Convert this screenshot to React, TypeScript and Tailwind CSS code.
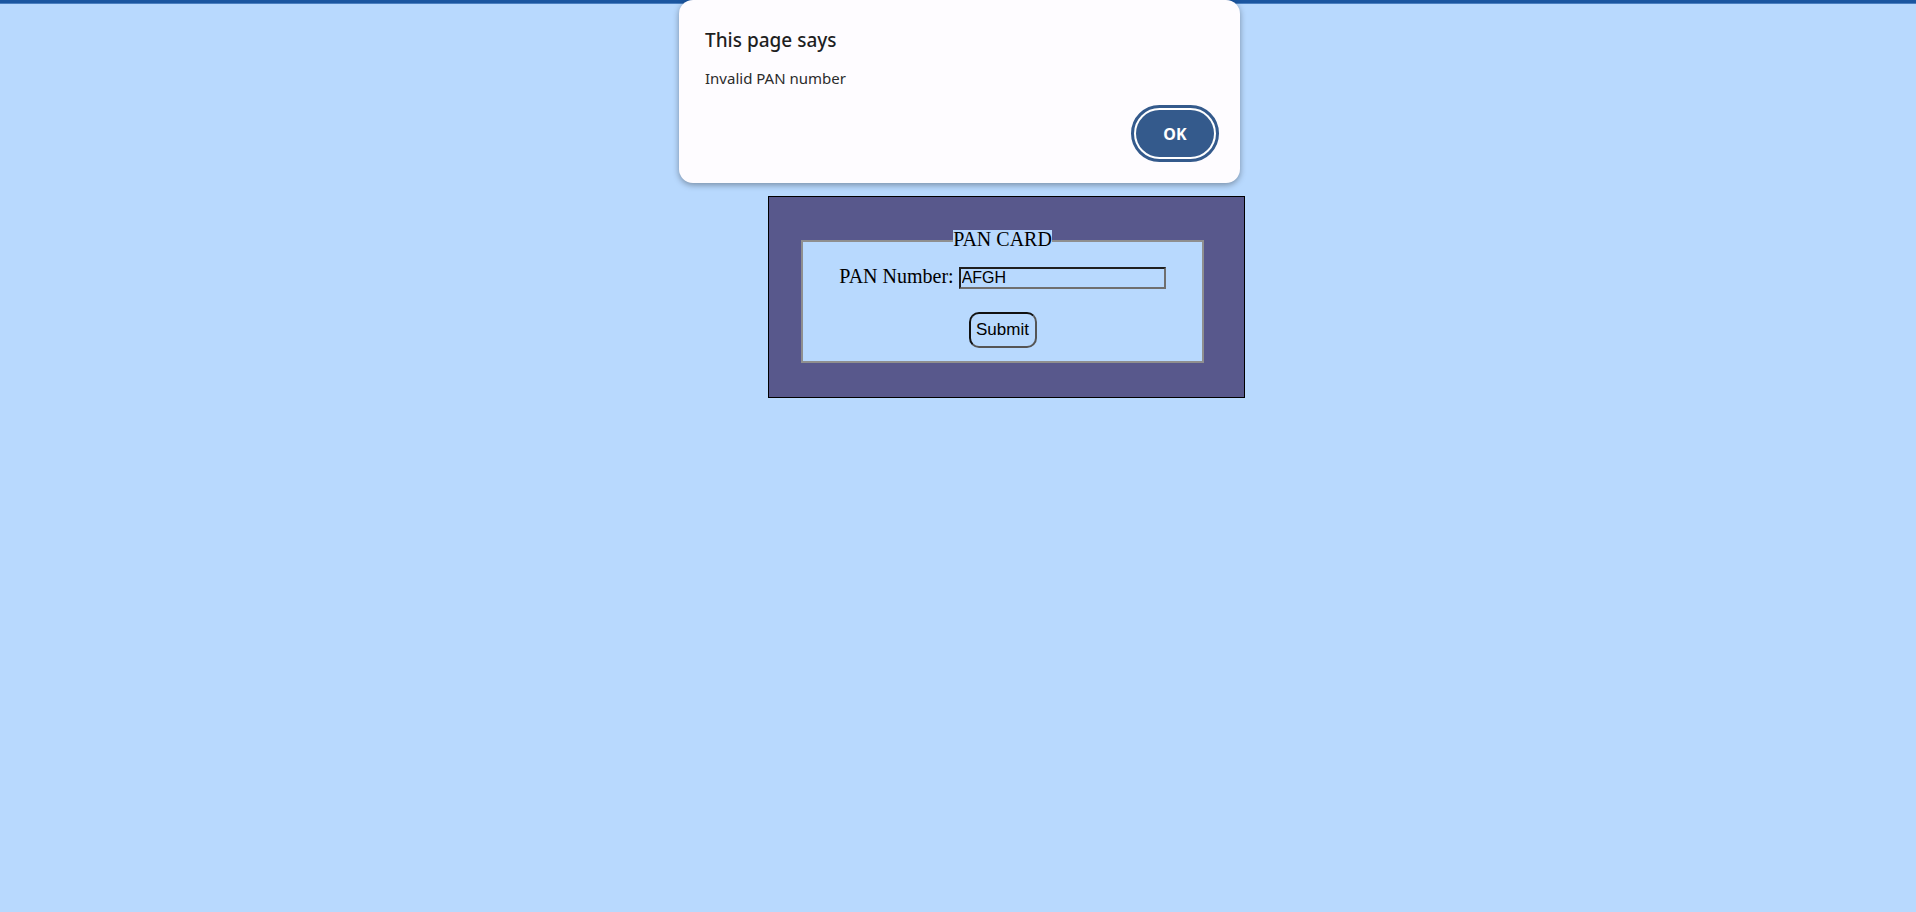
import { useState } from 'react';

function AlertDialog() {
  return (
    <div className="absolute top-0 left-[679px] w-[561px] h-[183px] rounded-[14px] bg-[#fefcff] shadow-[0_2px_6px_rgba(0,0,0,0.35)] font-['Noto_Sans',sans-serif]">
      <div className="pl-[26px] pt-[27px] text-[19px] leading-[26px] font-medium text-[#1f1f1f]">This page says</div>
      <div className="pl-[26px] mt-[15px] text-[15px] leading-[20px] text-[#2b2b2b]">Invalid PAN number</div>
      <div className="flex justify-end pr-[21px] mt-[17px]">
        <div className="rounded-full border-[3px] border-[#345a8c] bg-white p-[2px]">
          <button className="flex w-[78px] h-[47px] items-center justify-center rounded-full bg-[#345a8c] text-[16px] font-bold text-white">
            OK
          </button>
        </div>
      </div>
    </div>
  );
}

export default function App() {
  const [pan, setPan] = useState('AFGH');

  return (
    <div className="relative min-h-[912px] bg-[#b8d9fe]">
      <div className="h-[4px] bg-[#1b56a0] border-b border-[#4a7fc0]" />

      <div className="ml-[768px] mt-[192px] w-[477px] h-[202px] border border-black bg-[#58588c]">
        <fieldset className="ml-[32px] mt-[43px] w-[403px] border-2 border-[#8f8f8f] bg-[#b8d9fe] pb-[13px] font-['Liberation_Serif',serif] text-black">
          <div className="mx-auto -mt-[12px] w-fit bg-[#b8d9fe] text-[20px] leading-[18px]">PAN CARD</div>
          <div className="mt-[17px] flex items-baseline justify-center gap-[5px]">
            <label className="text-[20px] leading-[23px]">PAN Number:</label>
            <input
              value={pan}
              onChange={(e) => setPan(e.target.value)}
              className="w-[207px] h-[22px] border-2 border-t-[#1f1f1f] border-l-[#1f1f1f] border-b-[#6f6f6f] border-r-[#6f6f6f] bg-transparent px-[1px] font-['Liberation_Sans',sans-serif] text-[16px] leading-[18px] outline-none"
            />
          </div>
          <div className="mt-[23px] flex justify-center">
            <button className="w-[68px] h-[36px] rounded-[10px] border-2 border-t-[#111] border-l-[#111] border-b-[#555] border-r-[#555] font-['Liberation_Sans',sans-serif] text-[17px]">
              Submit
            </button>
          </div>
        </fieldset>
      </div>

      <AlertDialog />
    </div>
  );
}
